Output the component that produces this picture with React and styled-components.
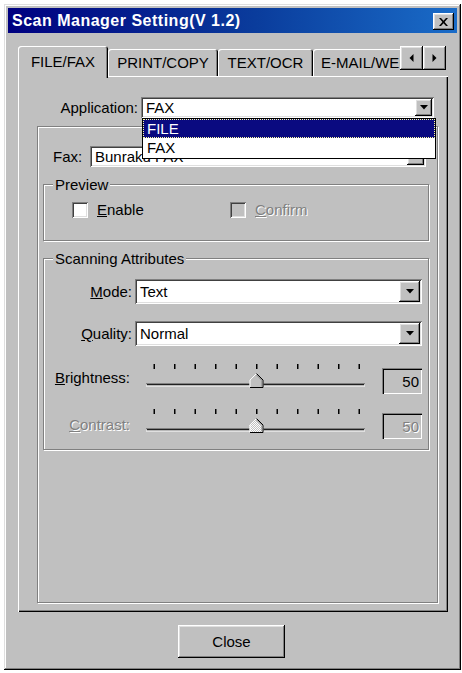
import React from 'react'
import styled, { createGlobalStyle } from 'styled-components'

const GlobalStyle = createGlobalStyle`
  body {
    margin: 0;
    background: #fff;
    font-family: "Liberation Sans", Arial, sans-serif;
    font-size: 15px;
    color: #000;
  }
`

const raisedBtn = `
  box-shadow: inset -1px -1px #000, inset 1px 1px #fff, inset -2px -2px #808080, inset 2px 2px #dfdfdf;
`
const sunkenField = `
  box-shadow: inset 1px 1px #808080, inset -1px -1px #fff, inset 2px 2px #404040, inset -2px -2px #dfdfdf;
`
const disabledText = `
  color: #808080;
  text-shadow: 1px 1px #fff;
`

const Window = styled.div`
  margin: 4px 0 0 4px;
  width: 457px;
  height: 666px;
  box-sizing: border-box;
  padding: 4px;
  background: #c0c0c0;
  box-shadow: inset -1px -1px #000, inset 1px 1px #dfdfdf, inset -2px -2px #808080, inset 2px 2px #fff;
  display: flex;
  flex-direction: column;
`

const TitleBar = styled.div`
  height: 25px;
  flex: none;
  display: flex;
  align-items: center;
  justify-content: space-between;
  padding: 0 3px 0 4px;
  background: linear-gradient(90deg, #000080 0%, #0a3c9c 55%, #1a6cc8 100%);
`

const TitleText = styled.span`
  color: #fff;
  font-weight: bold;
  font-size: 16px;
  letter-spacing: 0.5px;
  white-space: nowrap;
`

const CloseBox = styled.div`
  width: 21px;
  height: 17px;
  margin-top: 2px;
  background: #c0c0c0;
  display: flex;
  align-items: center;
  justify-content: center;
  ${raisedBtn}
`

const Content = styled.div`
  padding: 13px 9px 0 10px;
  display: flex;
  flex-direction: column;
`

const TabStrip = styled.div`
  height: 30px;
  display: flex;
  align-items: flex-start;
`

const TabClip = styled.div`
  position: relative;
  z-index: 1;
  width: 382px;
  height: 32px;
  overflow: hidden;
  display: flex;
  align-items: flex-end;
`

const Tab = styled.div`
  flex: none;
  width: ${p => p.$w}px;
  height: ${p => (p.$active ? 32 : 27)}px;
  margin-bottom: ${p => (p.$active ? 0 : 2)}px;
  padding-bottom: ${p => (p.$active ? 2 : 0)}px;
  box-sizing: border-box;
  display: flex;
  align-items: center;
  justify-content: ${p => (p.$clip ? 'flex-start' : 'center')};
  padding-left: ${p => (p.$clip ? 8 : 0)}px;
  white-space: nowrap;
  background: #c0c0c0;
  border-radius: 3px 3px 0 0;
  box-shadow: inset 1px 1px #fff, inset -1px 0 #000, inset -2px 0 #808080;
`

const ScrollButtons = styled.div`
  display: flex;
`

const ScrollButton = styled.div`
  width: 23px;
  height: 24px;
  background: #c0c0c0;
  display: flex;
  align-items: center;
  justify-content: center;
  ${raisedBtn}
`

const Panel = styled.div`
  height: 536px;
  box-sizing: border-box;
  background: #c0c0c0;
  box-shadow: inset 1px 1px #fff, inset -1px -1px #000, inset -2px -2px #808080;
  display: flex;
  flex-direction: column;
`

const Row = styled.div`
  display: flex;
  align-items: ${p => p.$align || 'center'};
  margin: ${p => p.$m || '0'};
`

const Label = styled.div`
  flex: none;
  width: ${p => p.$w}px;
  text-align: ${p => p.$left ? 'left' : 'right'};
  padding-right: 3px;
  padding-top: ${p => p.$top || 0}px;
  box-sizing: border-box;
  white-space: nowrap;
  line-height: 17px;
  ${p => p.$disabled && disabledText}
`

const ComboBox = styled.div`
  position: relative;
  flex: 1;
  height: ${p => p.$h}px;
  box-sizing: border-box;
  padding: 2px;
  background: #fff;
  display: flex;
  align-items: stretch;
  ${sunkenField}
`

const ComboText = styled.div`
  flex: 1;
  padding-left: 3px;
  white-space: nowrap;
  overflow: hidden;
  display: flex;
  align-items: center;
`

const DropButton = styled.div`
  flex: none;
  width: ${p => p.$w}px;
  background: #c0c0c0;
  display: flex;
  align-items: center;
  justify-content: center;
  ${raisedBtn}
`

const DropList = styled.div`
  position: absolute;
  z-index: 5;
  top: 100%;
  left: 1px;
  right: -2px;
  background: #fff;
  border: 1px solid #000;
  padding-bottom: 1px;
`

const ListItem = styled.div`
  height: 19px;
  line-height: 19px;
  padding-left: 4px;
  background: ${p => (p.$selected ? '#0a0a80' : '#fff')};
  color: ${p => (p.$selected ? '#fff' : '#000')};
  outline: ${p => (p.$selected ? '1px dotted #ffffa0' : 'none')};
  outline-offset: -1px;
`

const EtchedBox = styled.div`
  position: relative;
  border: 1px solid #808080;
  box-shadow: inset 1px 1px #fff, 1px 1px #fff;
`

const InnerGroup = styled(EtchedBox)`
  flex: 1;
  margin: 8px 10px 9px 19px;
  padding: 19px 8px 0 5px;
  display: flex;
  flex-direction: column;
`

const GroupBox = styled(EtchedBox)`
  height: ${p => p.$h}px;
  box-sizing: border-box;
  margin-top: 17px;
  padding: ${p => p.$pad || '0'};
`

const GroupTitle = styled.span`
  position: absolute;
  top: -9px;
  left: 9px;
  padding: 0 2px;
  line-height: 17px;
  background: #c0c0c0;
`

const CheckRow = styled.div`
  display: flex;
  align-items: center;
  padding: 16px 0 0 28px;
`

const CheckItem = styled.div`
  width: ${p => p.$w || 'auto'}px;
  display: flex;
  align-items: center;
  gap: 9px;
  ${p => p.$disabled && disabledText}
`

const CheckBox = styled.div`
  width: 16px;
  height: 16px;
  flex: none;
  background: ${p => (p.$disabled ? '#c0c0c0' : '#fff')};
  ${sunkenField}
`

const SliderWrap = styled.div`
  margin: 0 17px 0 13px;
  width: 219px;
  height: 31px;
`

const ValueBox = styled.div`
  width: 42px;
  height: 26px;
  margin-top: 5px;
  box-sizing: border-box;
  padding-right: 3px;
  display: flex;
  align-items: center;
  justify-content: flex-end;
  background: #c0c0c0;
  box-shadow: inset 1px 1px #808080, inset 2px 2px #000, inset -1px -1px #fff;
  ${p => p.$disabled && disabledText}
`

const ButtonRow = styled.div`
  display: flex;
  justify-content: center;
  margin-top: 13px;
  padding-right: 3px;
`

const Button = styled.div`
  width: 107px;
  height: 33px;
  display: flex;
  align-items: center;
  justify-content: center;
  background: #c0c0c0;
  ${raisedBtn}
`

const DownArrow = () => (
  <svg width="8" height="5" viewBox="0 0 8 5"><path d="M0 0h8L4 4.5z" fill="#000" /></svg>
)

const Combo = ({ value, h = 22, bw = 17, children }) => (
  <ComboBox $h={h}>
    <ComboText>{value}</ComboText>
    <DropButton $w={bw}><DownArrow /></DropButton>
    {children}
  </ComboBox>
)

const Slider = ({ value, disabled }) => {
  const ticks = Array.from({ length: 11 }, (_, i) => 8 + i * 20.5)
  const cx = 8 + (value / 10) * 20.5
  return (
    <SliderWrap>
      <svg width="219" height="31" viewBox="0 0 219 31">
        <defs>
          <pattern id="dither" width="2" height="2" patternUnits="userSpaceOnUse">
            <rect width="2" height="2" fill="#c0c0c0" />
            <rect width="1" height="1" fill="#fff" />
            <rect x="1" y="1" width="1" height="1" fill="#fff" />
          </pattern>
        </defs>
        {ticks.map(t => <rect key={t} x={t - 0.5} y="1" width="1.5" height="5" fill="#000" />)}
        <rect x="0" y="20" width="219" height="1" fill="#808080" />
        <rect x="1" y="21" width="217" height="1.5" fill="#202020" />
        <rect x="0" y="22.5" width="219" height="1" fill="#fff" />
        <path d={`M${cx - 7} 25V17L${cx} 10L${cx + 7} 17V25Z`} fill={disabled ? 'url(#dither)' : '#c0c0c0'} />
        <path d={`M${cx - 6.5} 24.5V17L${cx} 10.5`} stroke="#fff" fill="none" />
        <path d={`M${cx} 10.5L${cx + 6.5} 17V24.5H${cx - 6.5}`} stroke="#000" fill="none" />
        <path d={`M${cx} 12L${cx + 5.5} 17.5V23.5`} stroke="#808080" fill="none" />
      </svg>
    </SliderWrap>
  )
}

const App = () => {
  return (
    <>
      <GlobalStyle />
      <Window>
        <TitleBar>
          <TitleText>Scan Manager Setting(V 1.2)</TitleText>
          <CloseBox>
            <svg width="9" height="8" viewBox="0 0 9 8">
              <path d="M0 0h2l2.5 2.8L7 0h2L5.6 4 9 8H7L4.5 5.2 2 8H0l3.4-4z" fill="#000" />
            </svg>
          </CloseBox>
        </TitleBar>

        <Content>
          <TabStrip>
            <TabClip>
              <Tab $w={90} $active>FILE/FAX</Tab>
              <Tab $w={110}>PRINT/COPY</Tab>
              <Tab $w={95}>TEXT/OCR</Tab>
              <Tab $w={110} $clip>E-MAIL/WEB</Tab>
            </TabClip>
            <ScrollButtons>
              <ScrollButton>
                <svg width="5" height="8" viewBox="0 0 5 8"><path d="M4.5 0v8L0.5 4z" fill="#000" /></svg>
              </ScrollButton>
              <ScrollButton>
                <svg width="5" height="8" viewBox="0 0 5 8"><path d="M0.5 0v8L4.5 4z" fill="#000" /></svg>
              </ScrollButton>
            </ScrollButtons>
          </TabStrip>

          <Panel>
            <Row $m="21px 14px 0 0">
              <Label $w={123}>Application:</Label>
              <Combo value="FAX" h={21}>
                <DropList>
                  <ListItem $selected>FILE</ListItem>
                  <ListItem>FAX</ListItem>
                </DropList>
              </Combo>
            </Row>

            <InnerGroup>
              <Row $m="0 3px 0 10px">
                <Label $w={37} $left>Fax:</Label>
                <Combo value="Bunraku FAX" h={21} />
              </Row>

              <GroupBox $h={57}>
                <GroupTitle>Preview</GroupTitle>
                <CheckRow>
                  <CheckItem $w={158}>
                    <CheckBox />
                    <span><u>E</u>nable</span>
                  </CheckItem>
                  <CheckItem $disabled>
                    <CheckBox $disabled />
                    <span><u>C</u>onfirm</span>
                  </CheckItem>
                </CheckRow>
              </GroupBox>

              <GroupBox $h={192} $pad="20px 6px 0 0">
                <GroupTitle>Scanning Attributes</GroupTitle>
                <Row>
                  <Label $w={91}><u>M</u>ode:</Label>
                  <Combo value="Text" h={25} bw={21} />
                </Row>
                <Row $m="17px 0 0 0">
                  <Label $w={91}><u>Q</u>uality:</Label>
                  <Combo value="Normal" h={25} bw={21} />
                </Row>
                <Row $align="flex-start" $m="17px 0 0 0">
                  <Label $w={89} $top={6}><u>B</u>rightness:</Label>
                  <Slider value={50} />
                  <ValueBox>50</ValueBox>
                </Row>
                <Row $align="flex-start" $m="14px 0 0 0">
                  <Label $w={89} $top={8} $disabled><u>C</u>ontrast:</Label>
                  <Slider value={50} disabled />
                  <ValueBox $disabled>50</ValueBox>
                </Row>
              </GroupBox>
            </InnerGroup>
          </Panel>

          <ButtonRow>
            <Button>Close</Button>
          </ButtonRow>
        </Content>
      </Window>
    </>
  )
}

export default App
